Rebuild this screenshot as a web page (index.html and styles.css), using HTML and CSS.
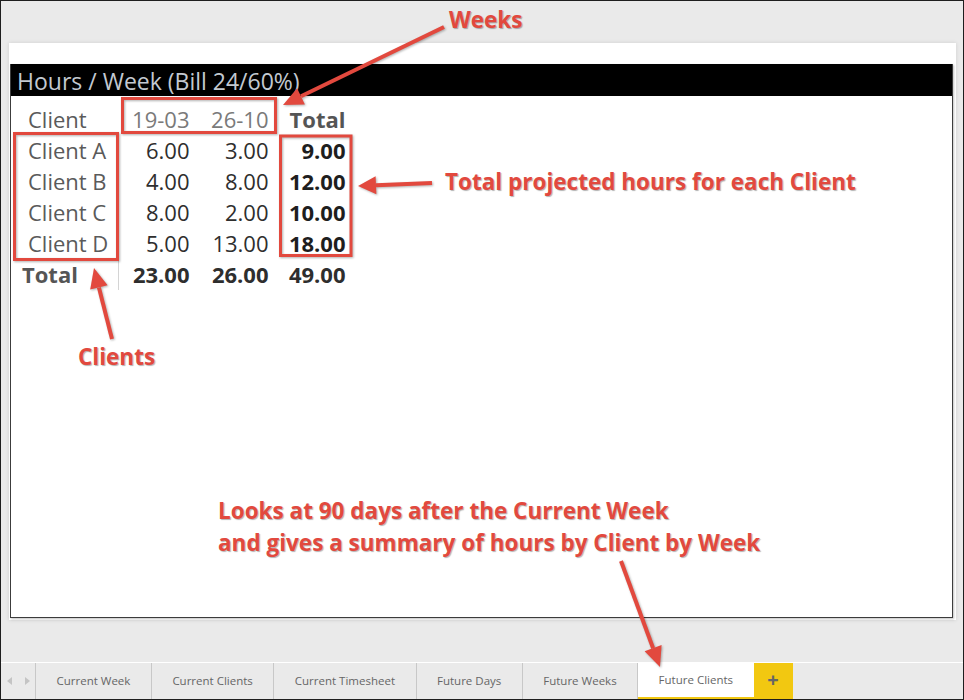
FILE: index.html
```html
<!DOCTYPE html>
<html lang="en">
<head>
  <meta charset="UTF-8" />
  <title>Future Clients</title>
  <link rel="stylesheet" href="styles.css">
</head>
<body>
  <div class="window">
    <div class="canvas">
      <div class="page">
        <div class="visual">
          <div class="visual-title">Hours / Week (Bill 24/60%)</div>
          <table class="matrix">
            <tr class="head">
              <td class="label">Client</td>
              <td class="week">19-03</td>
              <td class="week">26-10</td>
              <td class="total">Total</td>
            </tr>
            <tr>
              <td class="label">Client A</td>
              <td class="num">6.00</td>
              <td class="num">3.00</td>
              <td class="num total">9.00</td>
            </tr>
            <tr>
              <td class="label">Client B</td>
              <td class="num">4.00</td>
              <td class="num">8.00</td>
              <td class="num total">12.00</td>
            </tr>
            <tr>
              <td class="label">Client C</td>
              <td class="num">8.00</td>
              <td class="num">2.00</td>
              <td class="num total">10.00</td>
            </tr>
            <tr>
              <td class="label">Client D</td>
              <td class="num">5.00</td>
              <td class="num">13.00</td>
              <td class="num total">18.00</td>
            </tr>
            <tr class="grand">
              <td class="label">Total</td>
              <td class="num first">23.00</td>
              <td class="num">26.00</td>
              <td class="num">49.00</td>
            </tr>
          </table>
        </div>
      </div>
    </div>

    <div class="tabs">
      <div class="tab-nav">
        <svg width="34" height="36" viewBox="0 0 34 36">
          <polygon points="11,14 11,22 6,18" fill="#c4c4c4" />
          <polygon points="24,14 24,22 29,18" fill="#c4c4c4" />
        </svg>
      </div>
      <div class="tab">Current Week</div>
      <div class="tab">Current Clients</div>
      <div class="tab">Current Timesheet</div>
      <div class="tab">Future Days</div>
      <div class="tab">Future Weeks</div>
      <div class="tab active">Future Clients</div>
      <div class="tab-add">+</div>
    </div>

    <!-- callouts drawn over the report -->
    <svg class="marks" width="964" height="700" viewBox="0 0 964 700">
      <g fill="none" stroke="#e2493e" stroke-width="3">
        <rect x="122.5" y="98.5" width="153" height="34" />
        <rect x="14.5" y="133.5" width="103" height="126" />
        <rect x="280.5" y="136" width="70.5" height="119.5" />
      </g>
      <g stroke="#e2493e" stroke-width="4" fill="#e2493e">
        <line x1="444" y1="27" x2="301" y2="96.3" />
        <polygon stroke="none" points="283,105 304.9,104.4 297.1,88.2" />
        <line x1="432" y1="183" x2="376" y2="185.3" />
        <polygon stroke="none" points="358,186 376.4,194.3 375.6,176.3" />
        <line x1="112" y1="339" x2="98.9" y2="287.4" />
        <polygon stroke="none" points="94,268 107.6,285.2 90.2,289.6" />
        <line x1="621" y1="561" x2="653.1" y2="648.2" />
        <polygon stroke="none" points="660,667 661.6,645.1 644.6,651.3" />
      </g>
    </svg>
    <div class="note note-weeks">Weeks</div>
    <div class="note note-total">Total projected hours for each Client</div>
    <div class="note note-clients">Clients</div>
    <div class="note note-scope">Looks at 90 days after the Current Week<br>and gives a summary of hours by Client by Week</div>
  </div>
</body>
</html>
```

FILE: styles.css
```css
body {
  margin: 0;
  font-family: "Open Sans", "Noto Sans", sans-serif;
}
.window {
  position: relative;
  width: 964px;
  height: 700px;
  box-sizing: border-box;
  border: 1px solid #1e1e1e;
  background-color: #eaeaea;
  display: flex;
  flex-direction: column;
}
.canvas {
  flex: 1;
  padding: 42px 7px 42px 8px;
  display: flex;
}
.page {
  flex: 1;
  background-color: #fff;
  padding: 21px 3px 2px 1px;
  box-shadow: 0 0 4px rgba(0,0,0,0.12);
  display: flex;
}
.visual {
  flex: 1;
  border: 1px solid #3c3c3c;
  border-top: none;
  box-shadow: 1px 1px 2px rgba(0,0,0,0.25);
}
.visual-title {
  background-color: #000;
  color: #c3c9d1;
  font-size: 23px;
  line-height: 29px;
  height: 29px;
  padding: 3px 0 0 6px;
  white-space: nowrap;
}

/* matrix table */
.matrix {
  border-collapse: collapse;
  margin-top: 8px;
  font-size: 22px;
  line-height: 31px;
}
.matrix td {
  padding: 0;
  white-space: nowrap;
}
.matrix td:nth-child(1) { width: 107px; }
.matrix td:nth-child(2),
.matrix td:nth-child(3) { width: 71px; padding-right: 8px; }
.matrix td:nth-child(4) { width: 69px; padding-right: 8px; }
.matrix .label {
  color: #5a5a5a;
  padding-left: 17px;
  box-sizing: border-box;
}
.matrix .week {
  color: #7a7a7a;
  text-align: right;
}
.matrix .num {
  color: #2e2e2e;
  text-align: right;
}
.matrix .total {
  color: #1e1e1e;
  font-weight: bold;
  text-align: right;
}
.matrix .head .total {
  color: #555;
}
.matrix .grand td {
  font-weight: bold;
  color: #2e2e2e;
}
.matrix .grand .label {
  color: #555;
  padding-left: 11px;
}
.matrix .grand .first {
  border-left: 1px solid #d4d4d4;
}

/* sheet tabs */
.tabs {
  height: 36px;
  border-top: 1px solid #fff;
  display: flex;
  font-size: 11.5px;
  color: #666;
}
.tab-nav {
  width: 34px;
  border-right: 1px solid #c8c8c8;
}
.tab {
  padding: 0 20.5px;
  line-height: 36px;
  border-right: 1px solid #c8c8c8;
  white-space: nowrap;
}
.tab.active {
  background-color: #fff;
  border-right: none;
  line-height: 34px;
  border-bottom: 2px solid #f2c811;
}
.tab-add {
  width: 39px;
  background-color: #f2c811;
  color: #666;
  font-size: 20px;
  font-weight: bold;
  text-align: center;
  line-height: 34px;
}

/* annotations */
.marks {
  position: absolute;
  left: -1px;
  top: -1px;
  filter: drop-shadow(1px 1px 1px rgba(0,0,0,0.3));
}
.note {
  position: absolute;
  color: #e2493e;
  font-weight: bold;
  font-size: 22.5px;
  line-height: 32px;
  white-space: nowrap;
  text-shadow: 1px 1px 1px rgba(0,0,0,0.3);
}
.note-weeks { left: 448px; top: 3px; }
.note-total { left: 444px; top: 165px; }
.note-clients { left: 77px; top: 340px; }
.note-scope { left: 217px; top: 494px; }
```
